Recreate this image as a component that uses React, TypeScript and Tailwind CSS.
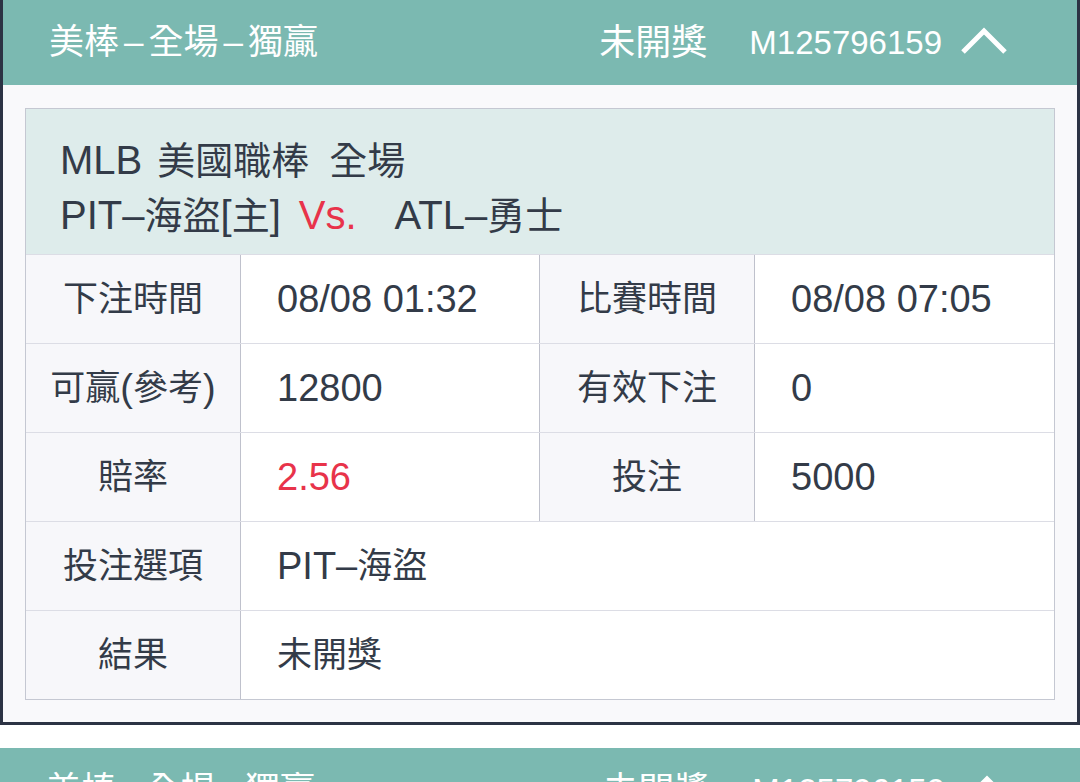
import React from 'react'

const font = { fontFamily: '"Liberation Sans", "Noto Sans CJK TC", sans-serif' }

// Latin runs are drawn a bit larger than the CJK glyphs, as on the device
function L({ children, big }: { children: React.ReactNode; big?: boolean }) {
  return <span className={big ? 'text-[40px]' : 'text-[38px]'}>{children}</span>
}

function Chevron() {
  return (
    <svg width="46" height="30" viewBox="0 0 46 30" className="block">
      <polyline points="2,26 23,5 44,26" fill="none" stroke="white" strokeWidth="5" />
    </svg>
  )
}

function Dash() {
  return <span className="mx-[5px]">–</span>
}

function Header() {
  return (
    <div className="flex h-[85px] items-center justify-between bg-[#7bb9b1] pl-[46px] pr-[70px] text-white">
      <div className="text-[35px]">
        美棒<Dash />全場<Dash />獨贏
      </div>
      <div className="flex items-center">
        <span className="text-[36px]">未開獎</span>
        <span className="ml-[42px] text-[33px]">M125796159</span>
        <span className="ml-[19px] -mt-[4px]">
          <Chevron />
        </span>
      </div>
    </div>
  )
}

function Label({ children, mid }: { children: React.ReactNode; mid?: boolean }) {
  return (
    <div
      className={`flex items-center justify-center bg-[#f7f7fa] border-[#bfc1cc] ${
        mid ? 'border-x' : 'border-r'
      }`}
    >
      {children}
    </div>
  )
}

function Value({ children, red, span }: { children: React.ReactNode; red?: boolean; span?: boolean }) {
  return (
    <div
      className={`flex items-center bg-white pl-[36px] ${red ? 'text-[#e8334a]' : ''} ${
        span ? 'col-span-3' : ''
      }`}
    >
      {children}
    </div>
  )
}

const rowClass =
  'grid h-[89px] grid-cols-[215px_298px_216px_1fr] border-t border-[#dcdde5] text-[35px] text-[#333b48]'

export default function App() {
  return (
    <div className="h-[782px] w-[1080px] overflow-hidden bg-white" style={font}>
      <div className="border-x-[3px] border-b-[3px] border-[#2c3344]">
        <Header />
        <div className="bg-[#f9f9fb] px-[22px] pt-[23px] pb-[22px]">
          <div className="border border-[#c5c8d2]">
            <div className="bg-[#deeceb] pl-[34px] pt-[24px] pb-[11px] text-[38px] leading-[54px] text-[#333b48]">
              <div>
                <L big>MLB</L>
                <span className="ml-[15px]">美國職棒</span>
                <span className="ml-[20px]">全場</span>
              </div>
              <div>
                <L big>PIT–</L>海盜<L big>[</L>主<L big>]</L>
                <span className="ml-[18px] text-[#e8334a]">
                  <L big>Vs.</L>
                </span>
                <span className="ml-[38px]">
                  <L big>ATL–</L>勇士
                </span>
              </div>
            </div>
            <div className={rowClass}>
              <Label>下注時間</Label>
              <Value>
                <L>08/08 01:32</L>
              </Value>
              <Label mid>比賽時間</Label>
              <Value>
                <L>08/08 07:05</L>
              </Value>
            </div>
            <div className={rowClass}>
              <Label>
                可贏<L>(</L>參考<L>)</L>
              </Label>
              <Value>
                <L>12800</L>
              </Value>
              <Label mid>有效下注</Label>
              <Value>
                <L>0</L>
              </Value>
            </div>
            <div className={rowClass}>
              <Label>賠率</Label>
              <Value red>
                <L>2.56</L>
              </Value>
              <Label mid>投注</Label>
              <Value>
                <L>5000</L>
              </Value>
            </div>
            <div className={rowClass}>
              <Label>投注選項</Label>
              <Value span>
                <L>PIT–</L>海盜
              </Value>
            </div>
            <div className={rowClass}>
              <Label>結果</Label>
              <Value span>未開獎</Value>
            </div>
          </div>
        </div>
      </div>
      <div className="h-[23px]" />
      <Header />
    </div>
  )
}
